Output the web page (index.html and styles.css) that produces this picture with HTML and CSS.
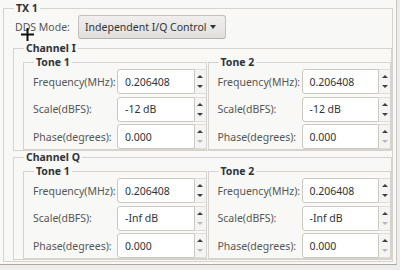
FILE: index.html
```html
<!DOCTYPE html>
<html lang="en">
<head>
    <meta charset="UTF-8">
    <title>TX 1</title>
    <link rel="stylesheet" href="styles.css">
</head>
<body>
    <div class="window">
        <fieldset class="frame tx">
            <legend>TX 1</legend>
            <div class="mode-row">
                <span class="mode-label">DDS Mode:</span>
                <button class="combo"><span>Independent I/Q Control</span><span class="caret"></span></button>
            </div>

            <fieldset class="frame channel">
                <legend>Channel I</legend>
                <div class="tones">
                    <fieldset class="frame tone">
                        <legend>Tone 1</legend>
                        <div class="fields">
                            <label>Frequency(MHz):</label>
                            <div class="spin"><span class="value">0.206408</span><span class="arrows"><i class="up"></i><i class="down"></i></span></div>
                            <label>Scale(dBFS):</label>
                            <div class="spin"><span class="value">-12 dB</span><span class="arrows"><i class="up"></i><i class="down"></i></span></div>
                            <label>Phase(degrees):</label>
                            <div class="spin"><span class="value">0.000</span><span class="arrows"><i class="up"></i><i class="down off"></i></span></div>
                        </div>
                    </fieldset>
                    <fieldset class="frame tone">
                        <legend>Tone 2</legend>
                        <div class="fields">
                            <label>Frequency(MHz):</label>
                            <div class="spin"><span class="value">0.206408</span><span class="arrows"><i class="up"></i><i class="down"></i></span></div>
                            <label>Scale(dBFS):</label>
                            <div class="spin"><span class="value">-12 dB</span><span class="arrows"><i class="up"></i><i class="down"></i></span></div>
                            <label>Phase(degrees):</label>
                            <div class="spin"><span class="value">0.000</span><span class="arrows"><i class="up"></i><i class="down off"></i></span></div>
                        </div>
                    </fieldset>
                </div>
            </fieldset>

            <fieldset class="frame channel">
                <legend>Channel Q</legend>
                <div class="tones">
                    <fieldset class="frame tone">
                        <legend>Tone 1</legend>
                        <div class="fields">
                            <label>Frequency(MHz):</label>
                            <div class="spin"><span class="value">0.206408</span><span class="arrows"><i class="up"></i><i class="down"></i></span></div>
                            <label>Scale(dBFS):</label>
                            <div class="spin"><span class="value">-Inf dB</span><span class="arrows"><i class="up"></i><i class="down off"></i></span></div>
                            <label>Phase(degrees):</label>
                            <div class="spin"><span class="value">0.000</span><span class="arrows"><i class="up"></i><i class="down off"></i></span></div>
                        </div>
                    </fieldset>
                    <fieldset class="frame tone">
                        <legend>Tone 2</legend>
                        <div class="fields">
                            <label>Frequency(MHz):</label>
                            <div class="spin"><span class="value">0.206408</span><span class="arrows"><i class="up"></i><i class="down"></i></span></div>
                            <label>Scale(dBFS):</label>
                            <div class="spin"><span class="value">-Inf dB</span><span class="arrows"><i class="up"></i><i class="down off"></i></span></div>
                            <label>Phase(degrees):</label>
                            <div class="spin"><span class="value">0.000</span><span class="arrows"><i class="up"></i><i class="down off"></i></span></div>
                        </div>
                    </fieldset>
                </div>
            </fieldset>
        </fieldset>

        <!-- mouse pointer caught in the screenshot -->
        <svg class="cursor" width="16" height="16" viewBox="0 0 16 16">
            <path d="M1 7.5h13M7.5 1v13" stroke="#111" stroke-width="2"/>
        </svg>
    </div>
</body>
</html>
```

FILE: styles.css
```css
body {
    margin: 0;
    background: #ececeb;
    font-family: "Noto Sans", sans-serif;
    font-size: 10.5px;
    color: #2e3436;
}
.window {
    position: relative;
    width: 396px;
    height: 264px;
    overflow: hidden;
    background: #f8f8f7;
    border-right: 1px solid #c9c5c1;
    border-bottom: 1px solid #aaa6a2;
}
.frame {
    margin: 0;
    min-width: 0;
    border: 1px solid #d6d2ce;
    padding: 0;
}
.frame > legend {
    padding: 0 2px;
    margin-left: 1px;
    line-height: 13px;
    font-weight: bold;
    color: #2e3436;
}
.tx {
    margin: 2px 3px 0 3px;
    padding: 0 0 1px 9px;
}
.mode-row {
    display: flex;
    align-items: center;
    height: 24px;
    padding-left: 2px;
    margin-bottom: 3px;
}
.mode-label {
    width: 63px;
    color: #555753;
}
.combo {
    display: flex;
    align-items: center;
    justify-content: space-between;
    width: 148px;
    height: 24px;
    padding: 0 9px 0 6px;
    border: 1px solid #c4bfba;
    border-bottom-color: #b6b0aa;
    border-radius: 3px;
    background: linear-gradient(#f0efee, #e1dfdd);
    font: inherit;
    color: #2e3436;
}
.caret {
    border-left: 3.5px solid transparent;
    border-right: 3.5px solid transparent;
    border-top: 4px solid #2e3436;
}
.channel {
    padding: 1px 0 0 9px;
}
.tones {
    display: flex;
    gap: 1px;
}
.tone {
    flex: 1;
    padding: 0 0 0 9px;
}
.fields {
    display: grid;
    grid-template-columns: 84px 1fr;
    grid-auto-rows: 25px;
    row-gap: 2.5px;
    align-items: center;
}
.fields label {
    color: #555753;
    white-space: nowrap;
}
.spin {
    display: flex;
    height: 25px;
}
.value {
    flex: 1;
    display: flex;
    align-items: center;
    padding-left: 7px;
    background: #fff;
    border: 1px solid #cdc7c2;
    border-radius: 3px 0 0 3px;
    color: #2e3436;
}
.arrows {
    width: 11px;
    display: flex;
    flex-direction: column;
    justify-content: space-between;
    align-items: center;
    padding: 5px 0 5px;
    background: #f4f4f3;
    border-top: 1px solid #e0dcd8;
    border-bottom: 1px solid #e0dcd8;
}
.up {
    border-left: 3px solid transparent;
    border-right: 3px solid transparent;
    border-bottom: 3px solid #3b3f40;
}
.down {
    border-left: 3px solid transparent;
    border-right: 3px solid transparent;
    border-top: 3px solid #3b3f40;
}
.down.off {
    border-top-color: #b9b9b7;
}
.cursor {
    position: absolute;
    left: 20px;
    top: 27px;
}
```
